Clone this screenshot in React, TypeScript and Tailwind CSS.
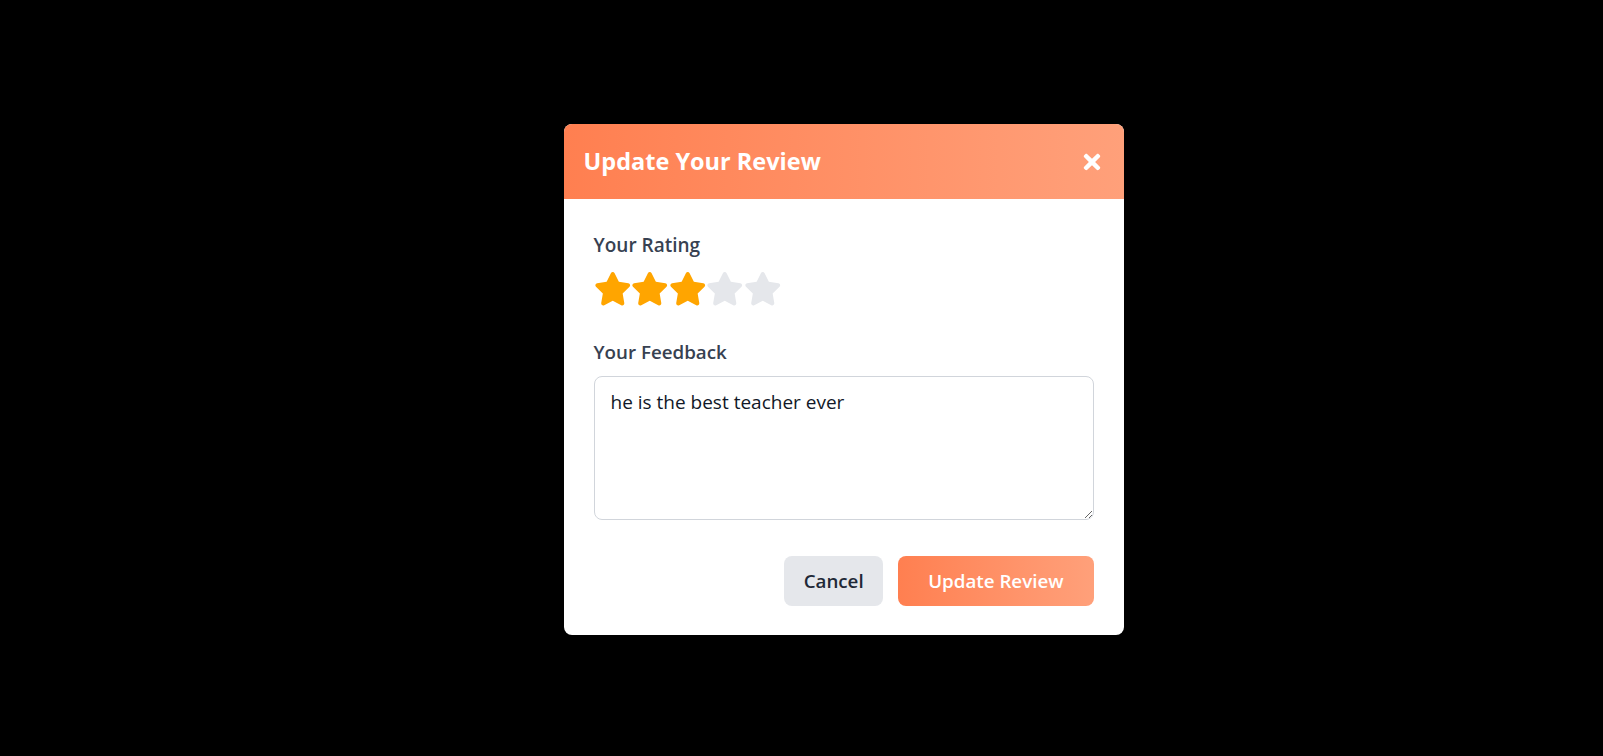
import { useState } from 'react'
import { FaStar, FaTimes } from 'react-icons/fa'

function Stars({ value, onChange }: { value: number; onChange: (v: number) => void }) {
  return (
    <div className="flex">
      {[1, 2, 3, 4, 5].map((n) => (
        <button key={n} type="button" onClick={() => onChange(n)} className="cursor-pointer">
          <FaStar size={37.5} className={n <= value ? 'text-[#FFA500]' : 'text-[#E5E7EB]'} />
        </button>
      ))}
    </div>
  )
}

export default function App() {
  const [rating, setRating] = useState(3)
  const [feedback, setFeedback] = useState('he is the best teacher ever')

  return (
    <div className="h-screen w-full bg-black flex items-center justify-center pl-[84px] pt-[3px] font-['Open_Sans',sans-serif]">
      <div className="w-[560px] bg-white rounded-lg overflow-hidden">
        <div className="h-[75px] px-5 flex items-center justify-between bg-linear-to-r from-[#FF7F50] to-[#FFA07A]">
          <h2 className="text-[23.5px] font-bold text-white">Update Your Review</h2>
          <button type="button" className="text-white cursor-pointer">
            <FaTimes size={24} />
          </button>
        </div>

        <div className="px-[30px] pt-[34px] pb-[29px]">
          <div>
            <label className="block text-[19px] leading-6 font-semibold text-[#374151] mb-[12.5px]">
              Your Rating
            </label>
            <Stars value={rating} onChange={setRating} />
          </div>

          <div className="mt-[33px]">
            <label className="block text-[18.75px] leading-6 font-semibold text-[#374151] mb-[12px]">
              Your Feedback
            </label>
            <textarea
              value={feedback}
              onChange={(e) => setFeedback(e.target.value)}
              className="block w-full h-[143.5px] px-4 py-3 text-[19px] leading-[26px] text-[#111827] border border-[#D1D5DB] rounded-lg outline-none"
            />
          </div>

          <div className="flex justify-end gap-[15px] mt-[36.5px]">
            <button
              type="button"
              className="h-[50px] px-[19.5px] rounded-lg bg-[#E5E7EB] text-[#1F2937] text-[18.75px] font-semibold cursor-pointer"
            >
              Cancel
            </button>
            <button
              type="button"
              className="h-[50px] px-[30px] rounded-lg bg-linear-to-r from-[#FF7F50] to-[#FFA07A] text-white text-[18.75px] font-semibold cursor-pointer"
            >
              Update Review
            </button>
          </div>
        </div>
      </div>
    </div>
  )
}
